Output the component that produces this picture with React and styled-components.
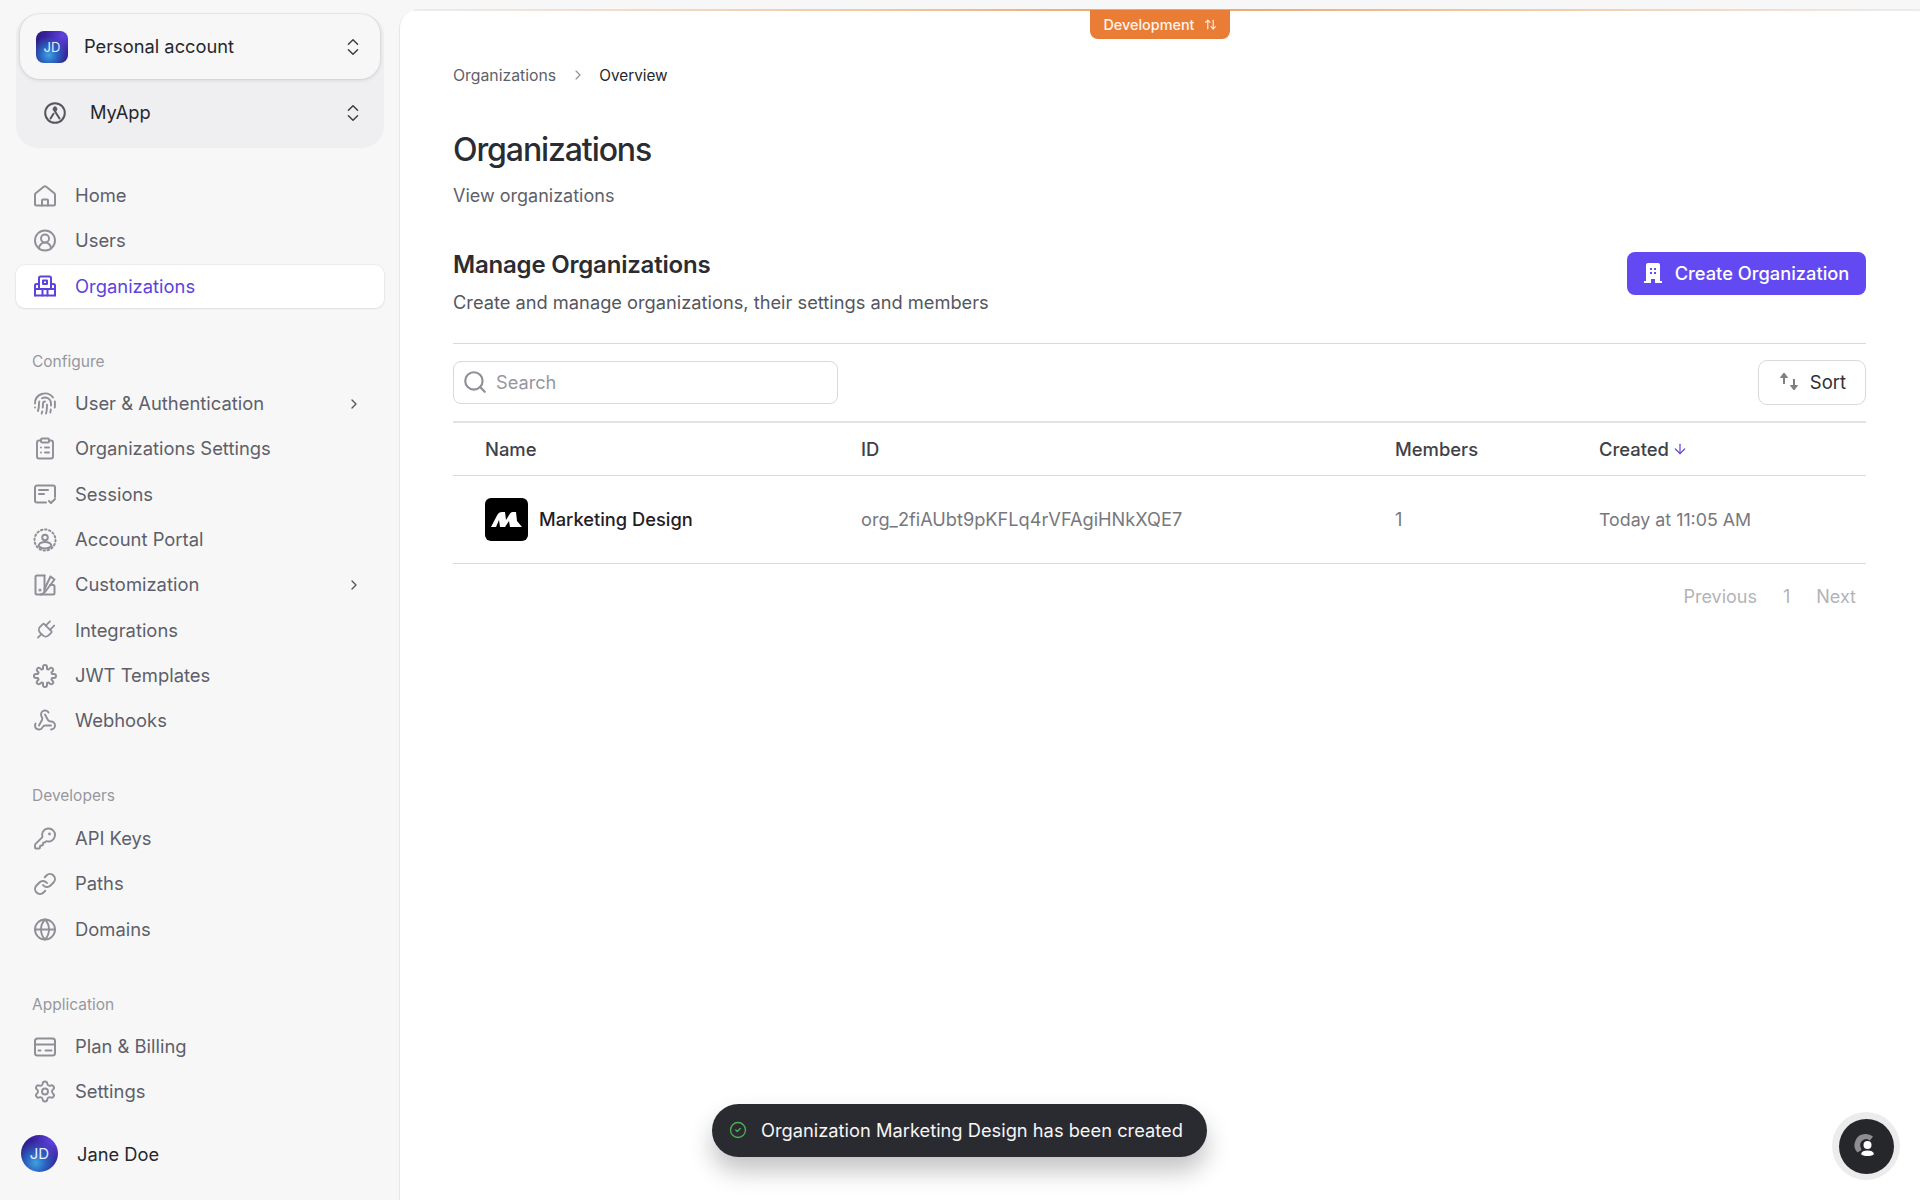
import React from 'react';
import styled, { createGlobalStyle } from 'styled-components';
import {
  ChevronsUpDown, ChevronRight, CircleUserRound, Fingerprint, ClipboardList, Plug, Webhook,
  KeyRound, Link, Globe, Settings, Search as SearchIcon, ArrowDown, ArrowUpDown, CircleCheck,
} from 'lucide-react';

const GlobalStyle = createGlobalStyle`
  html, body { margin: 0; padding: 0; background: #f7f7f8; }
  body { font-family: Inter, "Liberation Sans", sans-serif; color: #2f3037; -webkit-font-smoothing: antialiased; }
  * { box-sizing: border-box; }
`;

const Page = styled.div`display: flex; width: 1920px; height: 1200px; overflow: hidden; background: #f7f7f8; position: relative;`;

const Sidebar = styled.aside`width: 399px; flex: none; padding: 15px 15px 0 16px; display: flex; flex-direction: column;`;
const Switcher = styled.div`background: #efeff1; border-radius: 22px; padding-bottom: 2px; margin-top: -1px;`;
const AccountCard = styled.div`
  height: 65px; margin: 0 4px; padding: 0 16px 0 16px; display: flex; align-items: center;
  background: #f7f7f8; border-radius: 20px; box-shadow: 0 0 0 1px rgba(0,0,0,0.035), 0 1px 4px rgba(0,0,0,0.12);
`;
const AppRow = styled.div`height: 67px; margin: 0 4px; padding: 0 16px 0 23px; display: flex; align-items: center;`;
const SwitchLabel = styled.span`flex: 1; font-size: 18.3px; color: #26272c; margin: 0 0 2px ${p => p.$gap}px;`;
const Avatar = styled.div`
  width: ${p => p.$size}px; height: ${p => p.$size}px; border-radius: ${p => p.$round ? '50%' : '8px'}; flex: none;
  display: flex; align-items: center; justify-content: center; color: #e8eaff; font-size: ${p => p.$size > 34 ? 15 : 13}px;
  background: radial-gradient(circle at 40% 75%, #3fa3e0 0%, #2b62c0 28%, transparent 62%), radial-gradient(circle at 85% 15%, #5f45e0 0%, #3a1f9c 45%, #1d1568 100%);
`;
const UpDown = styled(ChevronsUpDown)`color: #3c3d44; flex: none;`;

const NavGroup = styled.nav`display: flex; flex-direction: column; gap: 2.33px; margin-top: ${p => p.$top || 0}px;`;
const SectionLabel = styled.div`height: 20px; line-height: 20px; margin: 44px 0 10.5px 16px; font-size: 15.5px; color: #96979e;`;
const NavRow = styled.div`
  height: 43px; display: flex; align-items: center; padding: 0 22px 0 17px; border-radius: 9px; font-size: 18.4px;
  color: ${p => p.$active ? '#5b43e0' : '#5e5f6a'}; background: ${p => p.$active ? '#fff' : 'transparent'};
  box-shadow: ${p => p.$active ? '0 0 0 1px rgba(0,0,0,0.03), 0 1px 3px rgba(0,0,0,0.07)' : 'none'};
`;
const NavIcon = styled.span`
  width: 24px; height: 24px; flex: none; display: flex; align-items: center; justify-content: center;
  color: ${p => p.$active ? '#5b43e0' : '#8f9097'};
`;
const AppIcon = styled(NavIcon)`color: #55565e;`;
const NavText = styled.span`flex: 1; margin: 0 0 1px 18px;`;
const Arrow = styled(ChevronRight)`color: #55565e; flex: none;`;
const UserRow = styled.div`display: flex; align-items: center; margin: 22px 0 0 5px; font-size: 18.3px; color: #26272c;`;
const UserName = styled.span`margin-left: 19px;`;

const Main = styled.main`
  flex: 1; margin-top: 10px; background: #fff; border-left: 1px solid #e7e7e9; border-top-left-radius: 18px;
  padding: 54px 54px 0 53px; position: relative;
`;
const TopGlow = styled.div`
  position: absolute; top: -1px; left: 14px; right: 0; height: 2px;
  background: linear-gradient(90deg, #ececee 0%, #f3c9a4 30%, #eda06a 50%, #f3c9a4 72%, #ececee 100%);
`;
const EnvBadge = styled.div`
  position: absolute; top: 0; left: 690px; width: 140px; height: 29px; background: #e97d35; color: #fff4ea;
  border-radius: 0 0 8px 8px; font-size: 14.4px; font-weight: 500; display: flex; align-items: center; justify-content: center; gap: 9px;
`;
const SwapIcon = styled(ArrowUpDown)`color: #fff4ea;`;

const Crumbs = styled.div`height: 22px; display: flex; align-items: center; font-size: 15.8px; color: #5e5f6a;`;
const CrumbArrow = styled(ChevronRight)`color: #8f9097; margin: 0 13.5px;`;
const CrumbCurrent = styled.span`color: #26272c; font-size: 15.3px;`;
const Heading = styled.h1`margin: 44px 0 0; font-size: 32px; line-height: 40px; font-weight: 500; letter-spacing: -1.1px; color: #2b2c31;`;
const Lead = styled.p`margin: 14px 0 0; font-size: 18px; line-height: 24px; color: #5e5f6a;`;

const SectionHead = styled.header`
  margin-top: 42px; padding-bottom: 29px; border-bottom: 1px solid #d9d9dc; display: flex; justify-content: space-between; align-items: flex-start;
`;
const SectionTitle = styled.h2`margin: 0; font-size: 24px; line-height: 30px; font-weight: 600; letter-spacing: -0.2px; color: #2b2c31;`;
const SectionText = styled.p`margin: 10px 0 0; font-size: 18.25px; line-height: 24px; color: #55565e;`;
const PrimaryButton = styled.button`
  width: 239px; height: 43px; margin-top: 2px; padding: 0 0 2px; border: 0; border-radius: 8px; background: #6349f2; color: #fff; font: 500 18.3px Inter, sans-serif;
  display: flex; align-items: center; justify-content: center; gap: 13px;
`;

const Toolbar = styled.div`height: 77px; display: flex; align-items: center; justify-content: space-between;`;
const SearchBox = styled.label`
  width: 385px; height: 43px; border: 1.5px solid #d9d9dc; border-radius: 8px; display: flex; align-items: center; padding: 0 0 1px 8px; gap: 8px;
  color: #96979e; font-size: 18.2px;
`;
const LensIcon = styled(SearchIcon)`color: #8f9097;`;
const SortButton = styled.button`
  width: 108px; height: 45px; padding: 0 0 2px; border: 1.5px solid #d9d9dc; border-radius: 9px; background: #fff; color: #2f3037; font: 400 18.5px Inter, sans-serif;
  display: flex; align-items: center; justify-content: center; gap: 10px;
`;

const Row = styled.div`
  display: grid; grid-template-columns: 376px 534px 204px 1fr; align-items: center; padding: 0 0 1px 32px;
  height: ${p => p.$height}px; border-top: ${p => p.$thick ? '2px solid #e3e3e5' : '1px solid #d9d9dc'};
`;
const HeadCell = styled.div`font-size: 18.4px; font-weight: 500; color: #404147; display: flex; align-items: center; gap: 3px;`;
const Cell = styled.div`font-size: 18.2px; color: #77787e;`;
const DateCell = styled(Cell)`font-size: 17.8px;`;
const NameCell = styled.div`display: flex; align-items: center; gap: 11px; font-size: 18.3px; font-weight: 500; color: #1f2024;`;
const OrgLogo = styled.div`width: 43px; height: 43px; border-radius: 6px; background: #000; display: flex; align-items: center; justify-content: center;`;
const SortMark = styled(ArrowDown)`color: #5b43e0;`;
const Pagination = styled.div`
  border-top: 1px solid #d9d9dc; height: 66px; display: flex; align-items: center; justify-content: flex-end; gap: 26px; padding-right: 10px;
  font-size: 18px; color: #b3b3b8;
`;

const Toast = styled.div`
  position: absolute; left: 712px; top: 1104px; width: 495px; height: 53px; border-radius: 27px; background: #2a2b30; color: #f6f6f7;
  display: flex; align-items: center; padding: 0 0 2px 17px; gap: 14px; font-size: 18.3px; box-shadow: 0 14px 24px rgba(0,0,0,0.24);
`;
const ToastCheck = styled(CircleCheck)`color: #4cae54; flex: none;`;
const HelpRing = styled.div`
  position: absolute; left: 1832px; top: 1112px; width: 68px; height: 68px; border-radius: 50%; background: #ececed;
  display: flex; align-items: center; justify-content: center;
`;
const HelpButton = styled.div`width: 55px; height: 55px; border-radius: 50%; background: #26272b; display: flex; align-items: center; justify-content: center;`;

const Svg = ({ children, size = 24 }) => (
  <svg width={size} height={size} viewBox="0 0 24 24" fill="none" stroke="currentColor" strokeWidth="2" strokeLinecap="round" strokeLinejoin="round">{children}</svg>
);

const HomeGlyph = () => <Svg><path d="M2 20v-9.200c0-.6.3-1.100.7-1.500l8-6.500a2 2 0 0 1 2.600 0l8 6.500c.4.400.7.900.7 1.500V20a1.500 1.500 0 0 1-1.500 1.500H3.500A1.500 1.500 0 0 1 2 20Z" /><path d="M9 21.500v-5a1 1 0 0 1 1-1h4a1 1 0 0 1 1 1v5" /></Svg>;
const BuildingGlyph = () => <Svg><path d="M6 10V4a1.500 1.500 0 0 1 1.500-1.500h9A1.500 1.500 0 0 1 18 4v6" /><path d="M2 21.500V11.500A1.500 1.500 0 0 1 3.500 10H6M18 10h2.500a1.500 1.500 0 0 1 1.500 1.500v10" /><path d="M2 21.500h20M2 15h7.500M14.500 15H22M6 10v5M18 10v5" /><rect x="10" y="6.500" width="4" height="3.500" /><path d="M9.500 21.500V15h5v6.500" /></Svg>;
const SessionGlyph = () => <Svg><path d="M13 20.500H4a2 2 0 0 1-2-2v-13a2 2 0 0 1 2-2h16a2 2 0 0 1 2 2V15" /><path d="M6 8h9M6 12h5" /><path d="m16 19 2 2 4-4" /></Svg>;
const PortalGlyph = () => <Svg><circle cx="12" cy="12" r="10.500" strokeDasharray="1.500 2.600" /><circle cx="12" cy="9.500" r="2.800" /><path d="M5.500 17.500c1-2.500 3.500-3.500 6.500-3.500s5.500 1 6.500 3.500c-1 2-3.500 3-6.500 3s-5.500-1-6.500-3Z" /></Svg>;
const CustomGlyph = () => <Svg><path d="M11.500 2.500H4A1.500 1.500 0 0 0 2.500 4v16A1.500 1.500 0 0 0 4 21.500h16a1.500 1.500 0 0 0 1.500-1.500v-6.500A1.500 1.500 0 0 0 20 12h-3" /><path d="M11.500 2.500V17a4.500 4.500 0 0 1-4 4.500" /><path d="m11.500 16 6-12.500 4 3L12 19" /><circle cx="7" cy="17" r=".6" /></Svg>;
const JwtGlyph = () => <Svg><path d="M10 3a2 2 0 0 1 4 0v2l1.500.6L17 4.200a2 2 0 0 1 2.800 2.800l-1.400 1.500.6 1.500h2a2 2 0 0 1 0 4h-2l-.6 1.500 1.400 1.500a2 2 0 0 1-2.800 2.800l-1.500-1.400-1.500.6v2a2 2 0 0 1-4 0v-2l-1.500-.6L7 19.800A2 2 0 0 1 4.200 17l1.400-1.500-.6-1.500H3a2 2 0 0 1 0-4h2l.6-1.500L4.200 7A2 2 0 0 1 7 4.200l1.500 1.400L10 5Z" /></Svg>;
const CardGlyph = () => <Svg><rect x="2" y="3.500" width="20" height="17" rx="2.500" /><path d="M2 9.500h20M5.500 15.500h2M12.500 15.500h6" /></Svg>;
const AppGlyph = () => (
  <Svg><circle cx="12" cy="12" r="9.800" /><path d="m7.500 17.500 3-4.800M16.500 17.500 10.500 8M13.500 8l-1.300 2.200" /><circle cx="12" cy="7" r=".8" /></Svg>
);
const OrgButtonGlyph = () => (
  <svg width="18" height="20" viewBox="0 0 18 20"><path fill="#fff" fillRule="evenodd" d="M2 2a2 2 0 0 1 2-2h10a2 2 0 0 1 2 2v16h2v2h-7v-4H7v4H0v-2h2V2Zm4 3v2h2V5H6Zm4 0v2h2V5h-2ZM6 9v2h2V9H6Zm4 0v2h2V9h-2Z" /></svg>
);
const SortGlyph = () => (
  <svg width="22" height="19" viewBox="0 0 22 19" fill="#7f7f85" stroke="#7f7f85" strokeWidth="2">
    <path d="M6 12V3" fill="none" />
    <path d="M6 1 2.500 5.500h7Z" strokeWidth="1" strokeLinejoin="round" />
    <path d="M16 7v9" fill="none" />
    <path d="m16 18 3.500-4.500h-7Z" strokeWidth="1" strokeLinejoin="round" />
  </svg>
);
const MarkGlyph = () => (
  <svg width="31" height="16" viewBox="0 0 31 16"><path fill="#fff" d="M0 16 6 4.500C7.200 2 9 1 11 1h3l1 8 4-6.500C20 1 21 1 23 1h2l1 9 5 6H19l-1-6-4 6H9l-1-7-3 7Z" /></svg>
);
const HelpGlyph = () => (
  <svg width="28" height="28" viewBox="0 0 28 28">
    <path fill="#8e8e92" d="M14 2a11 11 0 0 1 7 2.500l-3 4A6 6 0 0 0 8.500 15l1 3-4 2.500A11 11 0 0 1 14 2Z" />
    <circle cx="15.500" cy="13" r="4" fill="#fff" />
    <path fill="#fff" d="M9 22c.500-2.500 3-3.500 6.500-3.500S21.500 19.500 22 22c-1 1.500-3.500 2-6.500 2S10 23.500 9 22Z" />
  </svg>
);

const mainNav = [
  { label: 'Home', icon: <HomeGlyph /> },
  { label: 'Users', icon: <CircleUserRound size={25} strokeWidth={1.9} /> },
  { label: 'Organizations', icon: <BuildingGlyph />, active: true },
];

const sections = [
  {
    title: 'Configure',
    items: [
      { label: 'User & Authentication', icon: <Fingerprint size={25} strokeWidth={1.9} />, more: true },
      { label: 'Organizations Settings', icon: <ClipboardList size={25} strokeWidth={1.9} /> },
      { label: 'Sessions', icon: <SessionGlyph /> },
      { label: 'Account Portal', icon: <PortalGlyph /> },
      { label: 'Customization', icon: <CustomGlyph />, more: true },
      { label: 'Integrations', icon: <Plug size={27} strokeWidth={1.8} style={{ transform: 'rotate(45deg)' }} /> },
      { label: 'JWT Templates', icon: <JwtGlyph /> },
      { label: 'Webhooks', icon: <Webhook size={25} strokeWidth={1.9} /> },
    ],
  },
  {
    title: 'Developers',
    items: [
      { label: 'API Keys', icon: <KeyRound size={25} strokeWidth={1.9} /> },
      { label: 'Paths', icon: <Link size={24} strokeWidth={2} /> },
      { label: 'Domains', icon: <Globe size={25} strokeWidth={1.9} /> },
    ],
  },
  {
    title: 'Application',
    items: [
      { label: 'Plan & Billing', icon: <CardGlyph /> },
      { label: 'Settings', icon: <Settings size={25} strokeWidth={1.9} /> },
    ],
  },
];

const NavItem = ({ item }) => (
  <NavRow $active={item.active}>
    <NavIcon $active={item.active}>{item.icon}</NavIcon>
    <NavText>{item.label}</NavText>
    {item.more && <Arrow size={16} strokeWidth={2} />}
  </NavRow>
);

export default function App() {
  return (
    <Page>
      <GlobalStyle />
      <Sidebar>
        <Switcher>
          <AccountCard>
            <Avatar $size={32}>JD</Avatar>
            <SwitchLabel $gap={16}>Personal account</SwitchLabel>
            <UpDown size={22} strokeWidth={1.6} />
          </AccountCard>
          <AppRow>
            <AppIcon><AppGlyph /></AppIcon>
            <SwitchLabel $gap={23}>MyApp</SwitchLabel>
            <UpDown size={22} strokeWidth={1.6} />
          </AppRow>
        </Switcher>

        <NavGroup $top={26}>
          {mainNav.map(item => <NavItem key={item.label} item={item} />)}
        </NavGroup>

        {sections.map(section => (
          <div key={section.title}>
            <SectionLabel>{section.title}</SectionLabel>
            <NavGroup>
              {section.items.map(item => <NavItem key={item.label} item={item} />)}
            </NavGroup>
          </div>
        ))}

        <UserRow>
          <Avatar $size={37} $round>JD</Avatar>
          <UserName>Jane Doe</UserName>
        </UserRow>
      </Sidebar>

      <Main>
        <TopGlow />
        <EnvBadge>Development <SwapIcon size={13} strokeWidth={2} /></EnvBadge>

        <Crumbs>
          Organizations
          <CrumbArrow size={16} strokeWidth={1.6} />
          <CrumbCurrent>Overview</CrumbCurrent>
        </Crumbs>
        <Heading>Organizations</Heading>
        <Lead>View organizations</Lead>

        <SectionHead>
          <div>
            <SectionTitle>Manage Organizations</SectionTitle>
            <SectionText>Create and manage organizations, their settings and members</SectionText>
          </div>
          <PrimaryButton><OrgButtonGlyph />Create Organization</PrimaryButton>
        </SectionHead>

        <Toolbar>
          <SearchBox><LensIcon size={26} strokeWidth={2} />Search</SearchBox>
          <SortButton><SortGlyph />Sort</SortButton>
        </Toolbar>

        <Row $height={54} $thick>
          <HeadCell>Name</HeadCell>
          <HeadCell>ID</HeadCell>
          <HeadCell>Members</HeadCell>
          <HeadCell>Created <SortMark size={16} strokeWidth={1.8} /></HeadCell>
        </Row>
        <Row $height={88}>
          <NameCell><OrgLogo><MarkGlyph /></OrgLogo>Marketing Design</NameCell>
          <Cell>org_2fiAUbt9pKFLq4rVFAgiHNkXQE7</Cell>
          <Cell>1</Cell>
          <DateCell>Today at 11:05 AM</DateCell>
        </Row>
        <Pagination>
          <span>Previous</span>
          <span>1</span>
          <span>Next</span>
        </Pagination>
      </Main>

      <Toast><ToastCheck size={18} strokeWidth={1.8} />Organization Marketing Design has been created</Toast>
      <HelpRing><HelpButton><HelpGlyph /></HelpButton></HelpRing>
    </Page>
  );
}
